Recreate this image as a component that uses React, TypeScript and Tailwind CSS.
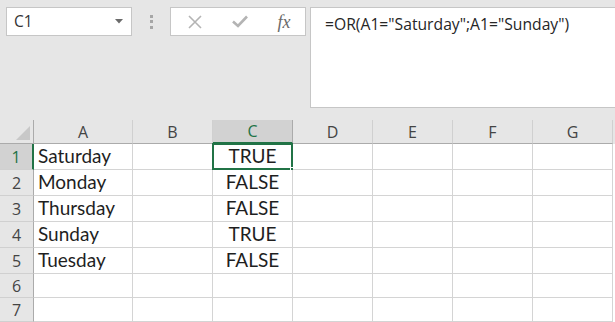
import React from "react";

const cols = ["A", "B", "C", "D", "E", "F", "G"];
const colW = ["w-[99px]", "w-[80px]", "w-[80px]", "w-[80px]", "w-[80px]", "w-[80px]", "w-[80px]"];
const data: [string, string][] = [
  ["Saturday", "TRUE"],
  ["Monday", "FALSE"],
  ["Thursday", "FALSE"],
  ["Sunday", "TRUE"],
  ["Tuesday", "FALSE"],
  ["", ""],
  ["", ""],
];

const cellFont = { fontFamily: "Lato, 'Liberation Sans', sans-serif" };
const uiFont = { fontFamily: "'Open Sans', 'Noto Sans', sans-serif" };

export default function App() {
  return (
    <div className="w-[615px] h-[322px] overflow-hidden bg-[#e6e6e6] text-[#262626]">
      {/* Formula bar */}
      <div className="h-[120px] flex items-start pt-[7px] pl-[6px]">
        <div className="w-[126px] h-[29px] bg-white border border-[#c6c6c6] flex items-center justify-between pl-[7px] pr-[8px]">
          <span className="text-[15.5px] text-[#333]" style={uiFont}>C1</span>
          <svg width="8" height="5" viewBox="0 0 8 5"><path d="M0 0 L8 0 L4 4.5 Z" fill="#6b6b6b" /></svg>
        </div>
        <div className="w-[38px] h-[29px] flex flex-col items-center justify-center gap-[2.5px]">
          <div className="w-[3px] h-[3px] bg-[#a6a6a6]" />
          <div className="w-[3px] h-[3px] bg-[#a6a6a6]" />
          <div className="w-[3px] h-[3px] bg-[#a6a6a6]" />
        </div>
        <div className="w-[136px] h-[29px] bg-white border border-[#c6c6c6] flex items-center">
          <div className="w-[45px] flex justify-center pl-[3px]">
            <svg width="14" height="14" viewBox="0 0 14 14"><path d="M1 1 L13 13 M13 1 L1 13" stroke="#b4b4b4" strokeWidth="1.6" /></svg>
          </div>
          <div className="w-[45px] flex justify-center pl-[2px]">
            <svg width="16" height="13" viewBox="0 0 16 13"><path d="M1 6.5 L6 11 L15 1.5" stroke="#b4b4b4" strokeWidth="2.6" fill="none" /></svg>
          </div>
          <div className="w-[44px] flex justify-center pl-[2px]">
            <span className="text-[18px] italic text-[#6a6a6a] leading-none" style={{ fontFamily: "'Liberation Serif', serif" }}>fx</span>
          </div>
        </div>
        <div className="ml-[4px] flex-1 h-[101px] bg-white border border-[#c6c6c6] border-r-0 pl-[14px] pt-[4px]">
          <span className="text-[15.7px] text-[#262626]" style={uiFont}>=OR(A1="Saturday";A1="Sunday")</span>
        </div>
      </div>

      {/* Grid */}
      <div className="flex flex-col" style={uiFont}>
        <div className="flex h-[24px]">
          <div className="w-[34px] h-full border-r border-b border-[#ababab] bg-[#e6e6e6] relative">
            <svg className="absolute right-[3px] bottom-[3px]" width="14" height="14" viewBox="0 0 14 14"><path d="M14 0 L14 14 L0 14 Z" fill="#c8c8c8" /></svg>
          </div>
          {cols.map((c, i) => (
            <div
              key={c}
              className={`${colW[i]} h-full flex items-center justify-center text-[16px] border-r ${
                c === "C"
                  ? "bg-[#d2d2d2] border-b-2 border-b-[#217346] border-r-[#ababab] text-[#217346]"
                  : "bg-[#e6e6e6] border-b border-b-[#ababab] border-r-[#d0d0d0] text-[#444]"
              }`}
            >
              {c}
            </div>
          ))}
        </div>
        {data.map((row, r) => {
          const h = r < 5 ? "h-[26px]" : "h-[24px]";
          return (
            <div key={r} className={`flex ${h}`}>
              <div
                className={`w-[34px] h-full flex items-center justify-center text-[16px] border-b border-[#d0d0d0] ${
                  r === 0
                    ? "bg-[#d2d2d2] border-r-2 border-r-[#217346] text-[#217346]"
                    : "bg-[#e6e6e6] border-r border-r-[#ababab] text-[#444]"
                }`}
              >
                {r + 1}
              </div>
              {cols.map((c, i) => (
                <div
                  key={c}
                  className={`${colW[i]} h-full bg-white border-r border-b border-[#d4d4d4] relative flex items-center text-[19px] text-[#1f1f1f] ${
                    c === "C" ? "justify-center" : "pl-[4px]"
                  }`}
                  style={cellFont}
                >
                  {c === "A" ? row[0] : c === "C" ? row[1] : ""}
                  {c === "C" && r === 0 && (
                    <>
                      <div className="absolute left-[-1px] top-[-1px] right-[-1px] bottom-[-1px] border-2 border-[#217346]" />
                      <div className="absolute right-[-4px] bottom-[-4px] w-[6px] h-[6px] bg-[#217346] border border-white" />
                    </>
                  )}
                </div>
              ))}
              <div className="flex-1 h-full bg-white" />
            </div>
          );
        })}
      </div>
    </div>
  );
}
